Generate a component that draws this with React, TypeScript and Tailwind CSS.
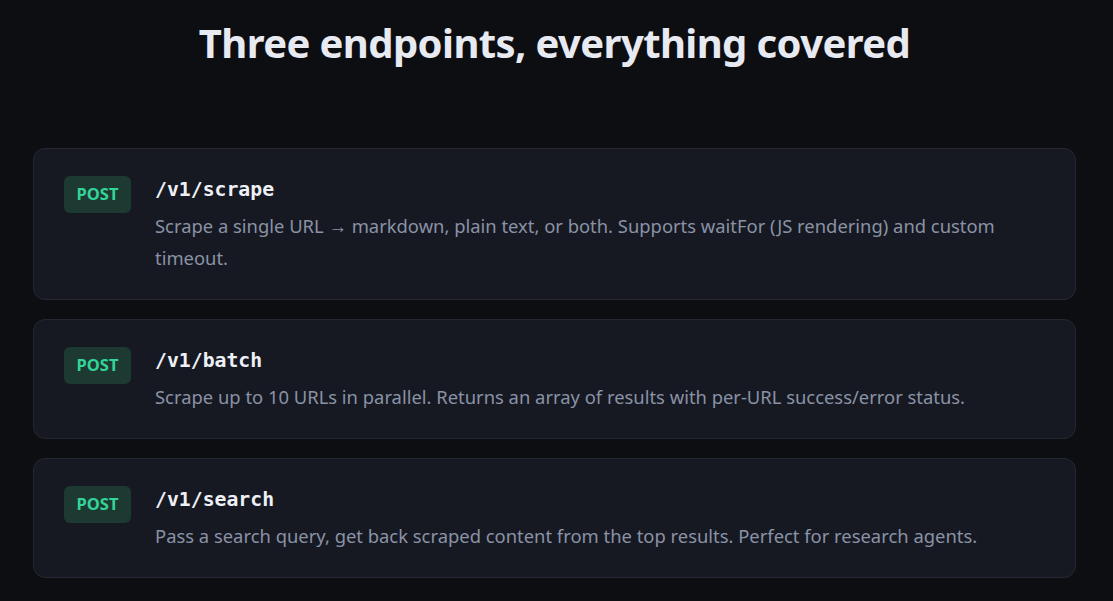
const endpoints = [
  {
    path: "/v1/scrape",
    desc: "Scrape a single URL → markdown, plain text, or both. Supports waitFor (JS rendering) and custom timeout.",
  },
  {
    path: "/v1/batch",
    desc: "Scrape up to 10 URLs in parallel. Returns an array of results with per-URL success/error status.",
  },
  {
    path: "/v1/search",
    desc: "Pass a search query, get back scraped content from the top results. Perfect for research agents.",
  },
];

export default function App() {
  return (
    <div className="min-h-screen bg-[#0d0e12] font-['Noto_Sans',sans-serif] pl-[33px] pr-[37px] pb-6">
      <h1 className="pt-[16px] text-center text-[40px] leading-[54px] font-bold tracking-[-0.6px] text-[#e8eaf2]">
        Three endpoints, everything covered
      </h1>
      <div className="mt-[78px] flex flex-col gap-[19px]">
        {endpoints.map((ep) => (
          <div
            key={ep.path}
            className="flex gap-6 rounded-xl border border-[#242832] bg-[#161922] px-[30px] pt-[27px] pb-[25px]"
          >
            <div className="flex h-[37px] w-[67px] shrink-0 items-center justify-center rounded-md bg-[#1c3a32] text-[16.5px] font-bold text-[#34d399]">
              POST
            </div>
            <div className="min-w-0 flex-1">
              <div className="pt-[1px] font-['DejaVu_Sans_Mono',monospace] text-[19.8px] leading-[26px] font-bold text-[#eef0f6]">
                {ep.path}
              </div>
              <p className="mt-[7px] text-[18.4px] leading-8 text-[#8a92a6]">
                {ep.desc}
              </p>
            </div>
          </div>
        ))}
      </div>
    </div>
  );
}
